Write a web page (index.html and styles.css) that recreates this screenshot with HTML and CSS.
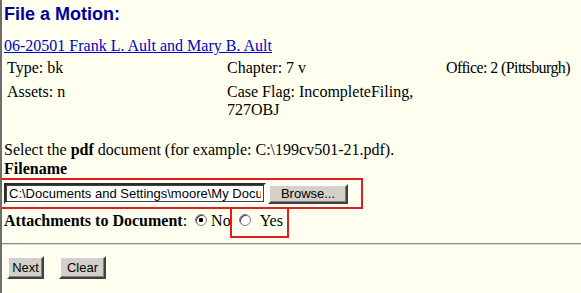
FILE: index.html
```html
<!DOCTYPE html>
<html lang="en">
<head>
    <meta charset="UTF-8">
    <title>File a Motion</title>
    <link rel="stylesheet" href="styles.css">
</head>
<body>
    <h1>File a Motion:</h1>
    <a class="case" href="#">06-20501 Frank L. Ault and Mary B. Ault</a>
    <table class="info">
        <tr>
            <td class="c1">Type: bk</td>
            <td class="c2">Chapter: 7 v</td>
            <td class="c3">Office: 2 (Pittsburgh)</td>
        </tr>
        <tr>
            <td class="c1">Assets: n</td>
            <td class="c2">Case Flag: IncompleteFiling,<br>727OBJ</td>
            <td class="c3"></td>
        </tr>
    </table>

    <p class="select">Select the <b>pdf</b> document (for example: C:\199cv501-21.pdf).</p>
    <div class="label"><b>Filename</b></div>
    <div class="file-row">
        <input class="file-input" type="text" value="C:\Documents and Settings\moore\My Documents\motion.pdf">
        <button class="btn browse">Browse...</button>
    </div>
    <div class="attach">
        <b>Attachments to Document</b>:
        <label class="opt no"><input type="radio" name="att" checked>No</label>
        <label class="opt yes"><input type="radio" name="att">Yes</label>
    </div>
    <hr>
    <div class="actions">
        <button class="btn next">Next</button>
        <button class="btn clear">Clear</button>
    </div>
</body>
</html>
```

FILE: styles.css
```css
html {
    background: #fffff0;
}
body {
    margin: 0;
    min-height: 293px;
    border-left: 2px solid #6e6e6e;
    padding: 0 0 0 2px;
    font-family: "Liberation Serif", "Times New Roman", serif;
    font-size: 16px;
    color: #000;
    background: #fffff0;
}

h1 {
    margin: 0;
    padding-top: 3px;
    font-family: "Liberation Sans", Arial, sans-serif;
    font-size: 18px;
    color: #0000a0;
    line-height: 22px;
}

.case {
    display: block;
    margin-top: 12px;
    color: #0000cc;
    line-height: 18px;
}

.info {
    border-collapse: separate;
    border-spacing: 2px;
    margin-top: 1px;
    width: 577px;
    table-layout: fixed;
}
.info td {
    vertical-align: top;
    padding: 1px;
    line-height: 18px;
    white-space: nowrap;
}
.info tr:first-child td {
    padding-bottom: 3px;
}
.c1 { width: 216px; }
.c2 { width: 215px; }
.c3 { letter-spacing: -0.6px; }

.select {
    margin: 19px 0 0 0;
    line-height: 18px;
}

.label {
    line-height: 18px;
    margin-top: 1px;
}

.file-row {
    display: inline-flex;
    align-items: center;
    gap: 2px;
    margin-left: -5px;
    padding: 3px 13px 3px 3px;
    border: 2px solid #e31c1c;
}

.file-input {
    width: 252px;
    height: 15px;
    margin: 0;
    padding: 1px 3px;
    font-family: "Liberation Sans", Arial, sans-serif;
    font-size: 13px;
    border: 2px inset #d4d0c8;
    border-color: #808080 #fff #fff #808080;
    background: #fff;
    outline: 1px solid #404040;
    outline-offset: -3px;
}

.btn {
    margin: 0;
    padding: 0;
    height: 23px;
    font-family: "Liberation Sans", Arial, sans-serif;
    font-size: 13px;
    color: #000;
    background: #d4d0c8;
    border: 2px solid;
    border-color: #fff #404040 #404040 #fff;
    box-shadow: inset -1px -1px 0 #808080;
}
.browse {
    width: 80px;
    height: 20px;
}
.next {
    width: 37px;
}
.clear {
    width: 47px;
}

.attach {
    line-height: 18px;
    margin-top: 3px;
}
.opt {
    position: relative;
}
.no {
    margin-left: 4px;
}
.yes {
    margin-left: 4px;
}
.opt input {
    appearance: none;
    width: 12px;
    height: 12px;
    margin: 0;
    border-radius: 50%;
    border: 1px solid #808080;
    background: #fff;
    vertical-align: 0;
    box-shadow: inset 1px 1px 0 #404040;
}
.no input {
    margin-right: 4px;
}
.yes input {
    margin-right: 9px;
}
.opt input:checked {
    background: radial-gradient(circle, #000 0 2px, #fff 2.5px);
}
.yes::before {
    content: "";
    position: absolute;
    left: -9px;
    top: -5px;
    width: 55px;
    height: 27px;
    border: 2px solid #e31c1c;
}

hr {
    margin: 13px 0 0 -2px;
    border: 0;
    border-top: 1px solid #8a8a8a;
    border-bottom: 1px solid #d8d8d8;
}

.actions {
    display: flex;
    gap: 15px;
    padding: 11px 0 0 3px;
}
```
